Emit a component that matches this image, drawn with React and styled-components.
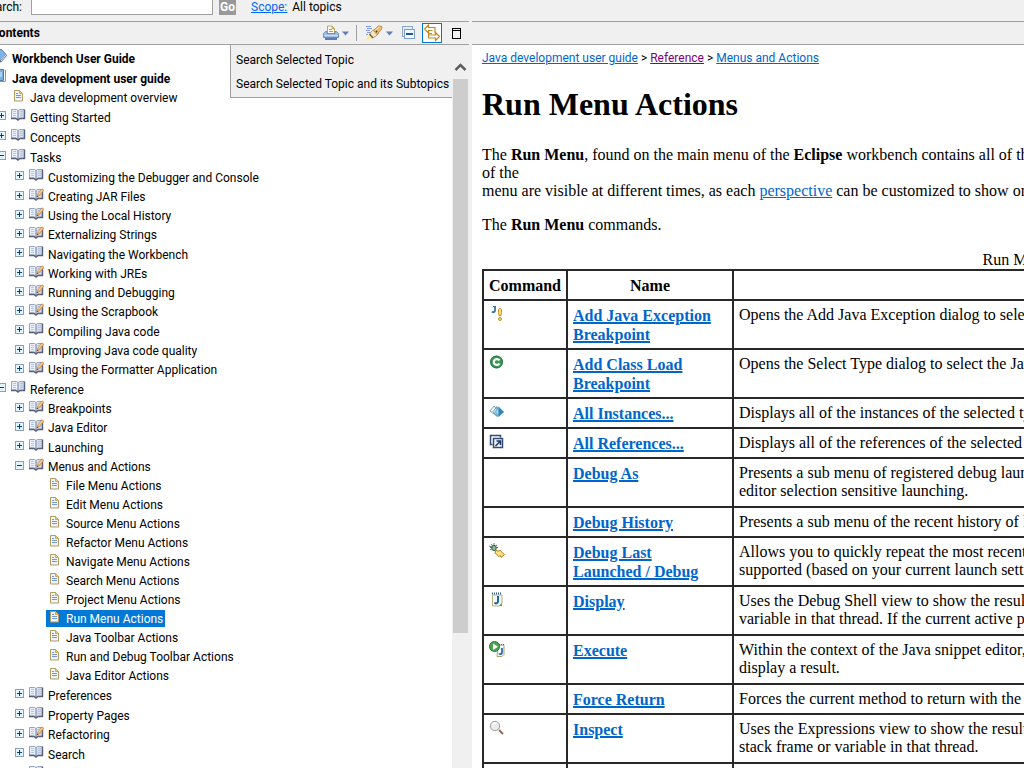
import React from "react";
import styled, { createGlobalStyle, css } from "styled-components";

const GlobalStyle = createGlobalStyle`
  *, *::before, *::after { box-sizing: border-box; }
  body {
    margin: 0;
    overflow: hidden;
    background: #fff;
    color: #000;
    font: 12px/16px Roboto, "Open Sans", sans-serif;
  }
  button, input { font: inherit; }
`;

const LINE = "#a0a0a0";
const CHROME = "#f0f0f0";
const LINK = "#0066cc";

const Page = styled.div`
  display: flex;
  flex-direction: column;
  height: 100vh;
  overflow: hidden;
`;

const SearchBar = styled.form`
  display: flex;
  align-items: flex-end;
  flex: none;
  height: 21px;
  padding-bottom: 6px;
  background: ${CHROME};
  white-space: nowrap;
`;

const SearchLabel = styled.label`
  flex: none;
  display: flex;
  justify-content: flex-end;
  width: 22px;
`;

const SearchInput = styled.input`
  flex: none;
  width: 182px;
  height: 22px;
  margin: 0 6px 0 9px;
  border: 1px solid ${LINE};
  background: #fff;
`;

const GoButton = styled.button`
  flex: none;
  width: 17px;
  height: 16px;
  margin-right: 15px;
  padding: 0;
  border: 0;
  background: #999;
  color: #fff;
  font-weight: 700;
  line-height: 16px;
`;

const ScopeLink = styled.a`
  margin-right: 5px;
  color: #0066ff;
`;

const Frames = styled.div`
  display: flex;
  flex: 1;
  min-height: 0;
`;

const Splitter = styled.div`
  flex: none;
  width: 3px;
  background: ${CHROME};
`;

const NavFrame = styled.nav`
  position: relative;
  display: flex;
  flex-direction: column;
  flex: none;
  width: 469px;
`;

const ToolbarStrip = styled.div`
  display: flex;
  align-items: center;
  flex: none;
  height: 24px;
  border-top: 1px solid ${LINE};
  border-bottom: 1px solid ${LINE};
  background: ${CHROME};
`;

const PaneTitle = styled.h2`
  flex: 1;
  margin: 0 0 0 -9px;
  font-size: 12px;
  line-height: 16px;
`;

const ToolButton = styled.button`
  display: flex;
  align-items: center;
  justify-content: center;
  width: 20px;
  height: 20px;
  padding: 0;
  border: 1px solid ${(p) => (p.$on ? "#0078d7" : "transparent")};
  background: ${(p) => (p.$on ? "#fff" : "transparent")};
`;

const MenuButton = styled(ToolButton)`
  width: 30px;
  gap: 3px;
`;

const Separator = styled.span`
  width: 1px;
  height: 16px;
  margin: 0 3px 0 1px;
  background: ${LINE};
`;

const Tools = styled.div`
  display: flex;
  align-items: center;
  gap: 4px;
  padding-right: 3px;
`;

const TreeArea = styled.div`
  display: flex;
  flex: 1;
  min-height: 0;
`;

const Tree = styled.ul`
  flex: 1;
  min-width: 0;
  margin: 0;
  padding: 4px 0 0;
  overflow: hidden;
  list-style: none;
`;

const TreeRow = styled.li`
  display: flex;
  align-items: flex-start;
  height: ${(p) => (p.$tall ? 20 : 19)}px;
  margin-left: -24px;
  padding-left: ${(p) => p.$depth * 18}px;
  white-space: nowrap;
`;

const ExpanderSlot = styled.span`
  flex: none;
  width: 16px;
  padding: 3px;
`;

const Expander = styled.button`
  display: block;
  width: 9px;
  height: 9px;
  padding: 0;
  border: 0;
  background: none;
  svg { display: block; }
`;

const TreeLink = styled.a`
  display: flex;
  gap: 4px;
  height: 17px;
  padding-right: 2px;
  color: #000;
  line-height: 18px;
  text-decoration: none;
  font-weight: ${(p) => (p.$bold ? 700 : 400)};
  svg { flex: none; display: block; }
  ${(p) => p.$tall && css`height: 20px; line-height: 20px;`}
  ${(p) => p.$selected && css`background: #0078d7; color: #fff;`}
`;

const ScrollTrack = styled.div`
  display: flex;
  flex-direction: column;
  flex: none;
  width: 17px;
  padding: 14px 1px 135px;
  background: ${CHROME};
`;

const ScrollArrow = styled.button`
  display: flex;
  justify-content: center;
  flex: none;
  height: 20px;
  padding: 3px 0 0;
  border: 0;
  background: none;
`;

const ScrollThumb = styled.div`
  flex: 1;
  background: #cdcdcd;
`;

const PopupMenu = styled.div`
  position: absolute;
  top: 24px;
  left: 230px;
  right: 17px;
  padding: 3px 0 1px;
  border-left: 1px solid ${LINE};
  border-bottom: 1px solid ${LINE};
  background: ${CHROME};
`;

const PopupItem = styled.button`
  display: block;
  width: 100%;
  height: 24px;
  padding: 0 0 0 5px;
  border: 0;
  background: none;
  color: #000;
  text-align: left;
  white-space: nowrap;
`;

const ContentFrame = styled.div`
  display: flex;
  flex-direction: column;
  flex: 1;
  min-width: 0;
`;

const Article = styled.main`
  flex: 1;
  min-height: 0;
  padding: 5px 10px 0;
  overflow: hidden;
  font: 16px/18px "Liberation Serif", "Times New Roman", serif;
  white-space: nowrap;
`;

const Breadcrumb = styled.div`
  font: 12px/16px Roboto, "Open Sans", sans-serif;
`;

const TextLink = styled.a`
  color: ${(p) => (p.$visited ? "#800080" : LINK)};
`;

const Title = styled.h1`
  margin: 20px 0 24px;
  font-size: 32px;
  line-height: 36px;
`;

const Paragraph = styled.p`
  margin: 0 0 16px;
`;

const CommandTable = styled.table`
  width: 1146px;
  table-layout: fixed;
  border-collapse: collapse;
  caption { line-height: 19px; }
`;

const Col = styled.col`
  width: ${(p) => p.$width}px;
`;

const HeadCell = styled.th`
  padding: 5px 5px 4px;
  border: 2px solid #282828;
  line-height: 19px;
`;

const Cell = styled.td`
  height: ${(p) => (p.$tall ? 49 : 30)}px;
  padding: 5px 5px 4px;
  border: 2px solid #282828;
  vertical-align: top;
  svg { display: block; }
`;

const NameCell = styled(Cell)`
  padding-right: 12px;
  line-height: 19px;
  white-space: normal;
`;

const CommandLink = styled.a`
  color: ${LINK};
  font-weight: 700;
  text-decoration-thickness: 2px;
`;

/* ---------- icons ---------- */

const PlusMinus = ({ open }) => (
  <svg width="9" height="9" viewBox="0 0 9 9" shapeRendering="crispEdges" aria-hidden="true">
    <rect x=".5" y=".5" width="8" height="8" fill="#e4f4fd" stroke="#8f9fb8" />
    <path d={open ? "M2 4.5h5" : "M2 4.5h5M4.5 2v5"} stroke="#00417f" />
  </svg>
);

const Book = ({ pencil }) => (
  <svg width="16" height="16" viewBox="0 0 16 16" aria-hidden="true">
    <path d="M1.500 1.500v8.500H6l2 1.500L10 10h4V1.500H9.500L8 2.500 6.500 1.500z" fill="#eaf1fa" stroke="#98a2b8" />
    <path d="M8.500 3l1.500-1h3.500v7.500H10l-1.500 1z" fill="#d5deeb" />
    <path d="M8 2.500v8.500" stroke="#707b96" />
    <path d="M3 3.500h3M3 5.500h3M3 7.500h3M10 3.500h3M10 5.500h3M10 7.500h3" stroke="#b4c6df" />
    <path d="M1 10.500h5l2 1.500 2-1.500h4.500V1.500" fill="none" stroke="#56607c" strokeWidth="1.400" />
    {pencil && (
      <>
        <path d="M9 9l.8-3L14 .8l1.800 1.400L11.500 7.500z" fill="#f0b673" stroke="#c98446" strokeWidth=".7" />
        <path d="M10.800 6L14.500 1.800" stroke="#ffd9a3" />
        <path d="M8.800 9.300l.4-1.600 1.100.9z" fill="#333" />
      </>
    )}
  </svg>
);

const Leaf = () => (
  <svg width="16" height="16" viewBox="0 0 16 16" aria-hidden="true">
    <path d="M4.500 1.500h5l3 3v7.500h-8z" fill="#eef4ff" stroke="#b09a5c" />
    <path d="M9.500 1.500v3h3z" fill="#f0cf7e" stroke="#cda755" />
    <path d="M6 4.500h2M6 6.500h5M6 8.500h5" stroke="#7897cc" />
  </svg>
);

const ClosedBook = () => (
  <svg width="16" height="16" viewBox="0 0 16 16" aria-hidden="true">
    <path d="M1 7l8-6.500 6.500 6.500L9 13.500 1 11z" fill="#5c7695" />
    <path d="M2 6l7-6 5 5.500-6 5z" fill="#7fb2ea" stroke="#5a84b3" />
    <path d="M9 12l6-5M8.500 10.500l5.500-4.500" stroke="#e5eaf0" />
  </svg>
);

const OpenBook = () => (
  <svg width="16" height="16" viewBox="0 0 16 16" aria-hidden="true">
    <path d="M3.500.5h8v11h-8z" fill="#77aee5" stroke="#497aa9" />
    <path d="M12.500 1h1v11.500H5" fill="none" stroke="#9a9489" />
    <path d="M6 3h4v5H6z" fill="#a9d0f7" />
  </svg>
);

const Printer = () => (
  <svg width="16" height="16" viewBox="0 0 16 16" aria-hidden="true">
    <path d="M4.500 8V1H9l2.500 2.500V8" fill="#fffef4" stroke="#c2a45f" />
    <path d="M9 1v2.500h2.500z" fill="#e8cc87" stroke="#c2a45f" />
    <path d="M6 4.500h3M6 6.500h4" stroke="#8f9fc7" />
    <path d="M4 6.500H2.500L.5 8.500v4h15v-4l-2-2H12v2H4z" fill="#a3bee3" stroke="#6f8dbd" />
    <path d="M1 10.500h14" stroke="#c7d8ef" />
    <path d="M2 13h12v2H2z" fill="#5f7cae" />
  </svg>
);

const DropArrow = () => (
  <svg width="7" height="5" viewBox="0 0 7 5" aria-hidden="true">
    <path d="M0 .5h7L3.500 4.500z" fill="#5f7fb4" />
  </svg>
);

const Torch = () => (
  <svg width="18" height="16" viewBox="0 0 18 16" aria-hidden="true">
    <path d="M1 1.500h5M2 3.500h5M1 5.500h4M2 7.500h3M1 9.500h2" stroke="#7f9bdb" />
    <path d="M4 9.500l3.500 3.500L3 15.500H0z" fill="#fbeea0" />
    <path d="M4.500 9.500C6 6 9 3.500 12 5.500s1 5-4.500 7.500z" fill="#f7e3bb" stroke="#9d8460" strokeWidth=".8" />
    <path d="M8.500 5.500L13.500.8l3.500.7-.5 3L12 9.500z" fill="#e7bb72" stroke="#b98340" strokeWidth=".8" />
    <path d="M10 5.500L14.500 2" stroke="#ffe8bb" />
    <path d="M4.500 9l3.500 4" stroke="#6d6258" strokeWidth="1.300" />
    <path d="M10.800 5.800l1.400 1.400" stroke="#444" strokeWidth="1.500" />
  </svg>
);

const CollapseAll = () => (
  <svg width="14" height="14" viewBox="0 0 14 14" shapeRendering="crispEdges" aria-hidden="true">
    <path d="M3.500 10.500h-2V.5h10v3" fill="#e6eff9" stroke="#8ba9d0" />
    <rect x="3.500" y="3.500" width="10" height="9" fill="#f1faff" stroke="#7e9cc8" />
    <path d="M5 8h7" stroke="#1d5690" strokeWidth="2" />
  </svg>
);

const LinkArrows = () => (
  <svg width="18" height="18" viewBox="0 0 18 18" aria-hidden="true">
    <path
      d="M1.500 5L5.500 1v2.500h6.500V9M1.500 5L5.500 9V6.500h4M16.500 12.500L12.500 8.500V11H5.500v3h7v2.500zM5.500 11V9.500H9"
      fill="none"
      stroke="#c48a22"
      strokeWidth="1.200"
    />
  </svg>
);

const Maximize = () => (
  <svg width="9" height="11" viewBox="0 0 9 11" shapeRendering="crispEdges" aria-hidden="true">
    <path d="M.5.5h8v10h-8zM0 2.500h9" fill="none" stroke="#000" />
  </svg>
);

const ChevronUp = () => (
  <svg width="13" height="10" viewBox="0 0 13 10" aria-hidden="true">
    <path d="M1.500 8L6.500 3l5 5" fill="none" stroke="#606060" strokeWidth="2.500" />
  </svg>
);

const commandIcons = {
  exception: (
    <>
      <path d="M6 0v4.500c0 2-2 2-3 1" fill="none" stroke="#3c719f" strokeWidth="1.800" />
      <path d="M4 .5h3" stroke="#3c719f" />
      <path d="M9.500 3.500l1-1h1l1 1v3l-.5 3h-2l-.5-3z" fill="#ffdc72" stroke="#c5901b" />
      <circle cx="11" cy="13" r="1.500" fill="#ffdc72" stroke="#c5901b" />
    </>
  ),
  classLoad: (
    <>
      <circle cx="7.500" cy="7" r="6.500" fill="#3d9757" />
      <circle cx="7.500" cy="7" r="5.800" fill="none" stroke="#2c7842" />
      <path d="M10.500 5.300C9 3.300 4.800 3.800 4.800 7s4.200 3.700 5.700 1.700" fill="none" stroke="#fff" strokeWidth="2.200" />
    </>
  ),
  instances: (
    <>
      <path d="M1 7L5 2l4 5-2.500 4z" fill="#fff" stroke="#6aa3c4" />
      <path d="M4 7.500L8 2.500v10z" fill="#e4f4fb" stroke="#4d91b9" />
      <path d="M9.500 2.500L15 8l-5.500 5z" fill="#2f86b8" />
      <path d="M9.500 3v9.500L6 8z" fill="#9bd3ed" stroke="#4d91b9" strokeWidth=".7" />
    </>
  ),
  references: (
    <>
      <path d="M3.500 10.500h-2v-9h10v2" fill="none" stroke="#344b77" strokeWidth="1.500" />
      <rect x="4.500" y="4.500" width="9" height="9" fill="#eef5fd" stroke="#344b77" strokeWidth="1.500" />
      <path d="M6.500 12L11 7.500M7.500 7h4v4" fill="none" stroke="#1f365e" strokeWidth="1.500" />
    </>
  ),
  debugLast: (
    <>
      <path d="M1 4.500h8M2 1l6 7M5 0v8M1 7l7-5M0 3l3 1" stroke="#557c68" />
      <ellipse cx="5" cy="5" rx="2.200" ry="2.700" fill="#8fb989" stroke="#376559" />
      <path d="M6 10l1-3 2 1.500L11 7l1 1.500 3.500 3-3.500 3-.5-2-2 1L7.500 11z" fill="#ffe48a" stroke="#b7801d" />
    </>
  ),
  display: (
    <>
      <path d="M3.500 3v11h7l2.500-3V3z" fill="#edf8fd" stroke="#b9b27e" />
      <path d="M3 1.500h10" stroke="#315f8d" strokeWidth="2" strokeDasharray="1 1" />
      <path d="M9 4v5.500c0 2-2.500 2.500-3.500 1" fill="none" stroke="#27649a" strokeWidth="2" />
      <path d="M10 14l3-3v3z" fill="#62a35d" />
    </>
  ),
  execute: (
    <>
      <path d="M9 4h6v9.500l-2 2H8z" fill="#edf8fd" stroke="#aaa36c" />
      <path d="M10 3.500h6" stroke="#315f8d" strokeDasharray="1 1" />
      <path d="M13 7v4.500c0 2-2 2-3 1" fill="none" stroke="#27649a" strokeWidth="1.700" />
      <circle cx="5.500" cy="5.500" r="5" fill="#4ba250" stroke="#2d7b36" />
      <path d="M4 2.500l5 3.200-5 3.300z" fill="#fff" />
    </>
  ),
  inspect: (
    <>
      <path d="M10 10l4 4" stroke="#8f6c62" strokeWidth="2" />
      <circle cx="6" cy="6" r="4.700" fill="#e8ebf0" stroke="#a09a8c" />
      <path d="M3.500 5.500C4 3 6 2.500 7.500 3" fill="none" stroke="#fff" strokeWidth="1.500" />
    </>
  ),
};

const CommandIcon = ({ name }) => (
  <svg width="16" height="16" viewBox="0 0 16 16" role="img" aria-label={name}>
    {commandIcons[name]}
  </svg>
);

/* ---------- data ---------- */

// kind: book | edit (book with pencil) | leaf | closed | opened
const tree = [
  [0, "closed", "Workbench User Guide"],
  [0, "opened", "Java development user guide", true],
  [1, "leaf", "Java development overview"],
  [1, "book", "Getting Started"],
  [1, "book", "Concepts"],
  [1, "book", "Tasks", true],
  [2, "book", "Customizing the Debugger and Console"],
  [2, "edit", "Creating JAR Files"],
  [2, "edit", "Using the Local History"],
  [2, "edit", "Externalizing Strings"],
  [2, "book", "Navigating the Workbench"],
  [2, "edit", "Working with JREs"],
  [2, "edit", "Running and Debugging"],
  [2, "edit", "Using the Scrapbook"],
  [2, "book", "Compiling Java code"],
  [2, "edit", "Improving Java code quality"],
  [2, "edit", "Using the Formatter Application"],
  [1, "book", "Reference", true],
  [2, "edit", "Breakpoints"],
  [2, "edit", "Java Editor"],
  [2, "book", "Launching"],
  [2, "edit", "Menus and Actions", true],
  [3, "leaf", "File Menu Actions"],
  [3, "leaf", "Edit Menu Actions"],
  [3, "leaf", "Source Menu Actions"],
  [3, "leaf", "Refactor Menu Actions"],
  [3, "leaf", "Navigate Menu Actions"],
  [3, "leaf", "Search Menu Actions"],
  [3, "leaf", "Project Menu Actions"],
  [3, "leaf", "Run Menu Actions"],
  [3, "leaf", "Java Toolbar Actions"],
  [3, "leaf", "Run and Debug Toolbar Actions"],
  [3, "leaf", "Java Editor Actions"],
  [2, "book", "Preferences"],
  [2, "book", "Property Pages"],
  [2, "edit", "Refactoring"],
  [2, "book", "Search"],
  [2, "book", "Views"],
];

const SELECTED = "Run Menu Actions";

const commands = [
  ["exception", "Add Java Exception Breakpoint", ["Opens the Add Java Exception dialog to select the exception"], true],
  ["classLoad", "Add Class Load Breakpoint", ["Opens the Select Type dialog to select the Java class"], true],
  ["instances", "All Instances...", ["Displays all of the instances of the selected type"]],
  ["references", "All References...", ["Displays all of the references of the selected object"]],
  [null, "Debug As", ["Presents a sub menu of registered debug launch shortcuts", "editor selection sensitive launching."], true],
  [null, "Debug History", ["Presents a sub menu of the recent history of launches"]],
  ["debugLast", "Debug Last Launched / Debug", ["Allows you to quickly repeat the most recent launch", "supported (based on your current launch settings)"], true],
  ["display", "Display", ["Uses the Debug Shell view to show the result of evaluating", "variable in that thread. If the current active part"], true],
  ["execute", "Execute", ["Within the context of the Java snippet editor, this command", "display a result."], true],
  [null, "Force Return", ["Forces the current method to return with the value"]],
  ["inspect", "Inspect", ["Uses the Expressions view to show the result of inspecting", "stack frame or variable in that thread."], true],
  [null, "Instance Breakpoints...", ["Opens the Instance Breakpoints dialog"]],
];

const TreeIcon = ({ kind }) => {
  if (kind === "leaf") return <Leaf />;
  if (kind === "closed") return <ClosedBook />;
  if (kind === "opened") return <OpenBook />;
  return <Book pencil={kind === "edit"} />;
};

const TreeItem = ({ depth, kind, label, open }) => {
  const tall = kind !== "leaf" && kind !== "edit";
  return (
    <TreeRow $depth={depth} $tall={tall}>
      <ExpanderSlot>
        {kind !== "leaf" && (
          <Expander type="button" aria-label={`Toggle ${label}`}>
            <PlusMinus open={open} />
          </Expander>
        )}
      </ExpanderSlot>
      <TreeLink href="#topic" $tall={tall} $bold={depth === 0} $selected={label === SELECTED}>
        <TreeIcon kind={kind} />
        {label}
      </TreeLink>
    </TreeRow>
  );
};

export default function App() {
  return (
    <>
      <GlobalStyle />
      <Page>
        <SearchBar onSubmit={(e) => e.preventDefault()}>
          <SearchLabel htmlFor="search">Search:</SearchLabel>
          <SearchInput id="search" type="text" />
          <GoButton>Go</GoButton>
          <ScopeLink href="#scope">Scope:</ScopeLink>
          <span>All topics</span>
        </SearchBar>

        <Frames>
          <NavFrame>
            <ToolbarStrip>
              <PaneTitle>Contents</PaneTitle>
              <Tools>
                <MenuButton aria-label="Print"><Printer /><DropArrow /></MenuButton>
                <Separator />
                <MenuButton aria-label="Search topics"><Torch /><DropArrow /></MenuButton>
                <ToolButton aria-label="Collapse all"><CollapseAll /></ToolButton>
                <ToolButton aria-label="Link with contents" $on><LinkArrows /></ToolButton>
                <ToolButton aria-label="Maximize"><Maximize /></ToolButton>
              </Tools>
            </ToolbarStrip>
            <TreeArea>
              <Tree>
                {tree.map(([depth, kind, label, open]) => (
                  <TreeItem key={label} depth={depth} kind={kind} label={label} open={open} />
                ))}
              </Tree>
              <ScrollTrack>
                <ScrollArrow aria-label="Scroll up"><ChevronUp /></ScrollArrow>
                <ScrollThumb />
              </ScrollTrack>
            </TreeArea>
            <PopupMenu role="menu">
              <PopupItem role="menuitem">Search Selected Topic</PopupItem>
              <PopupItem role="menuitem">Search Selected Topic and its Subtopics</PopupItem>
            </PopupMenu>
          </NavFrame>
          <Splitter />
          <ContentFrame>
            <ToolbarStrip />
            <Article>
              <Breadcrumb>
                <TextLink href="#guide">Java development user guide</TextLink>
                {" > "}
                <TextLink href="#reference" $visited>Reference</TextLink>
                {" > "}
                <TextLink href="#menus">Menus and Actions</TextLink>
              </Breadcrumb>
              <Title>Run Menu Actions</Title>
              <Paragraph>
                The <b>Run Menu</b>, found on the main menu of the <b>Eclipse</b> workbench contains all of the actions
                <br />
                of the
                <br />
                menu are visible at different times, as each <TextLink href="#perspective">perspective</TextLink> can be
                customized to show only
              </Paragraph>
              <Paragraph>
                The <b>Run Menu</b> commands.
              </Paragraph>
              <CommandTable>
                <caption>Run Menu Commands</caption>
                <colgroup>
                  <Col $width={84} />
                  <Col $width={166} />
                  <col />
                </colgroup>
                <thead>
                  <tr>
                    <HeadCell>Command</HeadCell>
                    <HeadCell>Name</HeadCell>
                    <HeadCell>Description</HeadCell>
                  </tr>
                </thead>
                <tbody>
                  {commands.map(([icon, name, lines, tall]) => (
                    <tr key={name}>
                      <Cell $tall={tall}>{icon && <CommandIcon name={icon} />}</Cell>
                      <NameCell $tall={tall}>
                        <CommandLink href="#command">{name}</CommandLink>
                      </NameCell>
                      <Cell $tall={tall}>
                        {lines.map((line, i) => (
                          <React.Fragment key={line}>
                            {i > 0 && <br />}
                            {line}
                          </React.Fragment>
                        ))}
                      </Cell>
                    </tr>
                  ))}
                </tbody>
              </CommandTable>
            </Article>
          </ContentFrame>
        </Frames>
      </Page>
    </>
  );
}
